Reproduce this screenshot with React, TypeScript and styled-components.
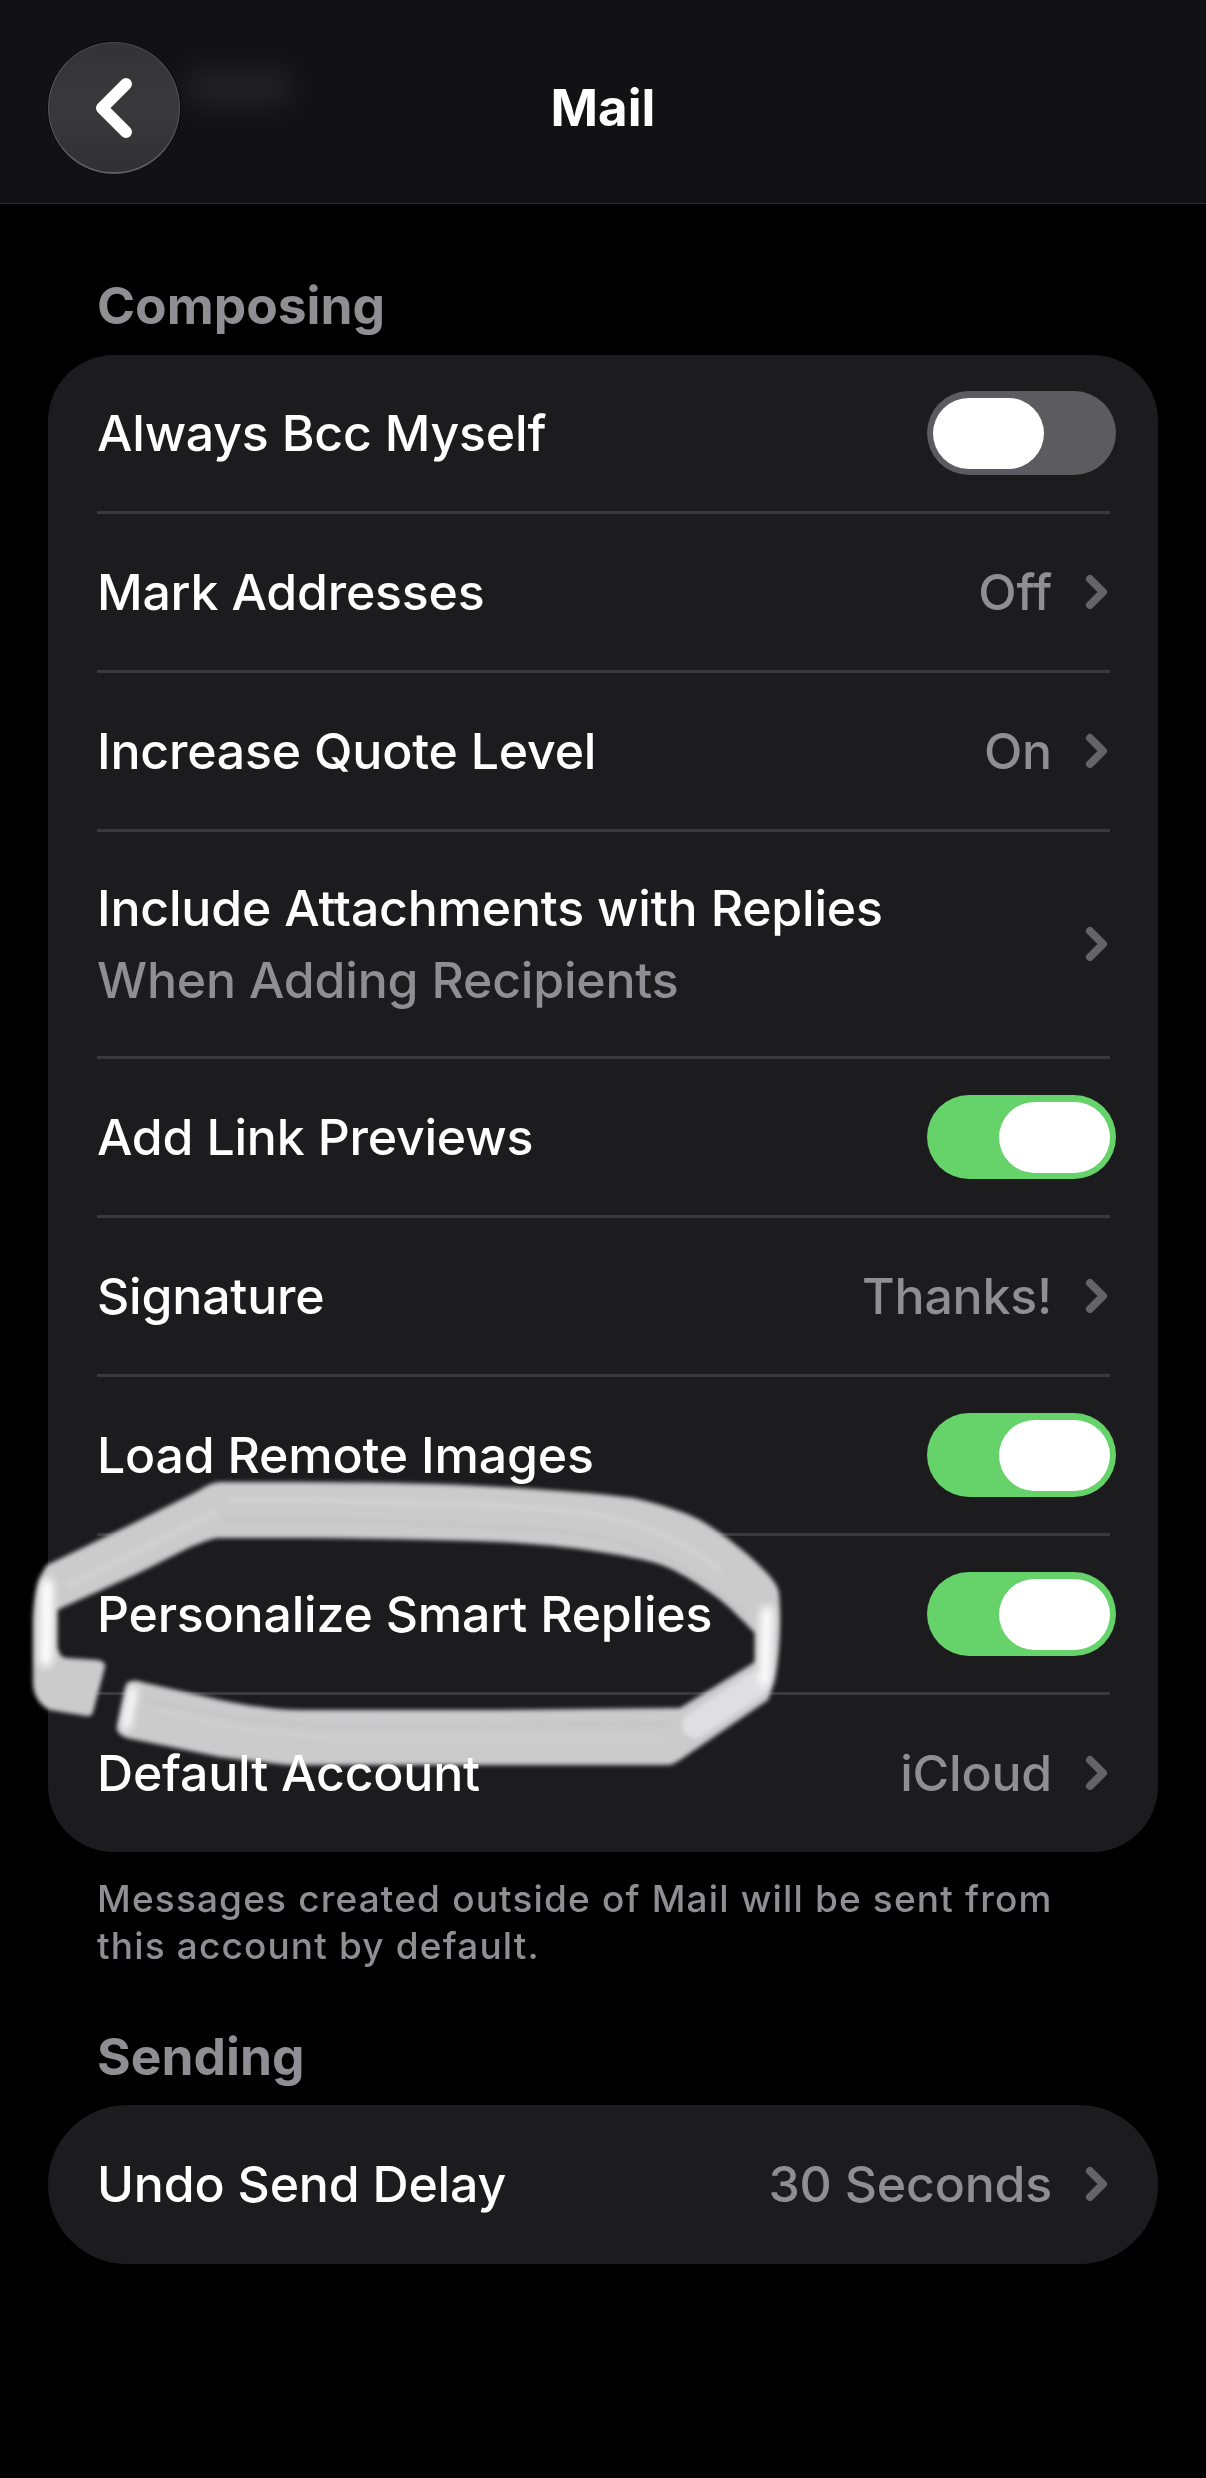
import styled, { createGlobalStyle } from 'styled-components'

const GlobalStyle = createGlobalStyle`
    html, body {
        margin: 0;
        padding: 0;
        background: #000;
    }
    body {
        font-family: Inter, "Noto Sans", "Liberation Sans", sans-serif;
        -webkit-font-smoothing: antialiased;
    }
`

// rows of the big "Composing" card
type RowData = {
    label: string;
    sub?: string;
    value?: string;
    toggle?: boolean;
    link?: boolean;
}

const composingRows: RowData[] = [
    { label: 'Always Bcc Myself', toggle: false },
    { label: 'Mark Addresses', value: 'Off', link: true },
    { label: 'Increase Quote Level', value: 'On', link: true },
    { label: 'Include Attachments with Replies', sub: 'When Adding Recipients', link: true },
    { label: 'Add Link Previews', toggle: true },
    { label: 'Signature', value: 'Thanks!', link: true },
    { label: 'Load Remote Images', toggle: true },
    { label: 'Personalize Smart Replies', toggle: true },
    { label: 'Default Account', value: 'iCloud', link: true },
]

const Chevron = () => (
    <ChevronIcon viewBox="0 0 23 36" aria-hidden="true">
        <path d="M5 5 L18 18 L5 31" fill="none" stroke="#636368" strokeWidth="8" strokeLinecap="round" strokeLinejoin="round" />
    </ChevronIcon>
)

const SettingRow = ({ row }: { row: RowData }) => (
    <Row $tall={!!row.sub}>
        <Labels>
            <Label>{row.label}</Label>
            {row.sub && <SubLabel>{row.sub}</SubLabel>}
        </Labels>
        {row.value && <Value>{row.value}</Value>}
        {row.link && <Chevron />}
        {row.toggle !== undefined && (
            <Toggle $on={row.toggle}>
                <Knob />
            </Toggle>
        )}
    </Row>
)

// the hand drawn marker ring around "Personalize Smart Replies"
const MarkerRing = () => (
    <RingCanvas viewBox="0 1460 820 320" aria-hidden="true">
        <defs>
            <filter id="soft" x="-5%" y="-5%" width="110%" height="110%">
                <feGaussianBlur stdDeviation="2.2" />
            </filter>
            <filter id="softer" x="-20%" y="-20%" width="140%" height="140%">
                <feGaussianBlur stdDeviation="4" />
            </filter>
        </defs>
        <path
            filter="url(#soft)"
            fill="#cbcbcc"
            d="M33 1620 C34 1595 38 1577 47 1565 L130 1525 L198 1491 C206 1486 212 1482 222 1482
               C320 1482 420 1482 500 1487 C550 1490 595 1493 633 1498 C660 1504 682 1511 700 1520
               C725 1535 750 1555 767 1573 C773 1580 778 1586 779 1593 C781 1615 780 1640 778 1657
               C776 1675 772 1690 768 1700 L680 1760 C675 1763 672 1765 667 1765 L500 1765 L287 1765
               L220 1757 L127 1738 C120 1735 117 1732 117 1727 L126 1686 C128 1681 132 1681 137 1681
               L220 1700 C250 1706 275 1710 303 1710 L500 1710 L680 1708 L755 1662 L755 1633
               C742 1620 730 1607 717 1597 C700 1585 685 1575 667 1567 C650 1560 625 1556 600 1552
               C570 1547 535 1544 500 1542 C400 1538 300 1538 217 1538 C190 1544 160 1564 130 1577
               L57 1610 L57 1647 C59 1654 62 1658 67 1658 L98 1660 C103 1661 106 1664 105 1667
               L93 1712 C92 1716 90 1716 86 1716 L50 1710 C40 1706 33 1695 33 1683 Z"
        />
        {/* faint streaks the marker leaves along the band */}
        <g filter="url(#soft)" fill="none" strokeLinecap="round">
            <path d="M230 1500 C340 1500 450 1502 560 1510 C620 1516 670 1530 720 1570" stroke="#d2d2d3" strokeWidth="5" />
            <path d="M225 1520 C340 1520 450 1522 570 1532 C640 1542 690 1565 745 1615" stroke="#c3c3c4" strokeWidth="3" />
            <path d="M70 1585 L140 1550 L215 1512" stroke="#d1d1d2" strokeWidth="7" />
            <path d="M150 1708 C220 1725 270 1735 340 1738 L660 1738" stroke="#cfcfd0" strokeWidth="4" />
            <path d="M145 1700 C220 1716 260 1724 330 1726 L670 1724" stroke="#c3c3c4" strokeWidth="3" />
            <path d="M695 1725 L755 1685" stroke="#dfdfe1" strokeWidth="26" />
        </g>
        {/* bright spots where the stroke turns */}
        <g filter="url(#softer)" fill="none" stroke="#ffffff" strokeLinecap="round">
            <path d="M47 1585 L46 1660" strokeWidth="13" />
            <path d="M767 1612 L765 1680" strokeWidth="12" />
            <path d="M133 1690 L126 1726" strokeWidth="9" />
        </g>
    </RingCanvas>
)

const App = () => {
    return (
        <Page>
            <GlobalStyle />
            <Header>
                <BackButton aria-label="Back">
                    <svg width="38" height="60" viewBox="0 0 38 60">
                        <path d="M31 6 L7 30 L31 54" fill="none" stroke="#fff" strokeWidth="12" strokeLinecap="round" strokeLinejoin="round" />
                    </svg>
                </BackButton>
                <Title>Mail</Title>
            </Header>

            <SectionTitle>Composing</SectionTitle>
            <Card>
                {composingRows.map((row, i) => (
                    <div key={row.label}>
                        {i > 0 && <Divider />}
                        <SettingRow row={row} />
                    </div>
                ))}
            </Card>
            <Footnote>
                Messages created outside of Mail will be sent from
                <br />
                this account by default.
            </Footnote>

            <SectionTitle $second>Sending</SectionTitle>
            <Card $pill>
                <SettingRow row={{ label: 'Undo Send Delay', value: '30 Seconds', link: true }} />
            </Card>

            <MarkerRing />
        </Page>
    )
}

export default App

const Page = styled.div`
    position: relative;
    width: 1206px;
    height: 2478px;
    overflow: hidden;
    background: #000;
    color: #fff;
`

const Header = styled.header`
    position: relative;
    box-sizing: border-box;
    height: 204px;
    padding: 42px 48px 0;
    display: flex;
    align-items: flex-start;
    background: #121214;
    border-bottom: 1px solid #2c2c2e;

    /* blurred page title sliding under the bar */
    &::after {
        content: '';
        position: absolute;
        left: 186px;
        top: 70px;
        width: 104px;
        height: 34px;
        background: #232325;
        filter: blur(14px);
    }
`

const BackButton = styled.div`
    position: relative;
    z-index: 1;
    box-sizing: border-box;
    width: 132px;
    height: 132px;
    border-radius: 50%;
    display: flex;
    align-items: center;
    justify-content: center;
    background: linear-gradient(180deg, #343436 0%, #39393b 55%, #303032 100%);
    border: 1px solid #55555a;
    border-top-color: #4a4a4d;
    border-bottom: 2px solid #5c5c60;
    box-shadow: 0 0 0 1px #0c0c0e;
`

const Title = styled.h1`
    position: absolute;
    left: 0;
    right: 0;
    top: 83px;
    margin: 0;
    text-align: center;
    font-size: 51px;
    line-height: 50px;
    font-weight: 700;
`

const SectionTitle = styled.h2<{ $second?: boolean }>`
    margin: ${(p) => (p.$second ? '58px' : '72px')} 0 ${(p) => (p.$second ? '20px' : '21px')} 97px;
    font-size: 51.5px;
    line-height: 58px;
    font-weight: 700;
    color: #8e8e93;
`

const Card = styled.section<{ $pill?: boolean }>`
    margin: 0 48px;
    padding: ${(p) => (p.$pill ? '1px 0 2px' : '0 0 1px')};
    background: #1c1c1e;
    border-radius: ${(p) => (p.$pill ? '79px' : '66px')};
    overflow: hidden;
`

const Row = styled.div<{ $tall?: boolean }>`
    height: ${(p) => (p.$tall ? '224px' : '156px')};
    padding: 0 42px 0 49px;
    display: flex;
    align-items: center;
`

const Labels = styled.div`
    flex: 1;
    min-width: 0;
`

const Label = styled.div`
    font-size: 50px;
    line-height: 60px;
    font-weight: 500;
    letter-spacing: -0.2px;
    color: #fff;
`

const SubLabel = styled.div`
    margin-top: 12px;
    font-size: 50px;
    line-height: 60px;
    font-weight: 500;
    letter-spacing: -0.2px;
    color: #8e8e93;
`

const Value = styled.div`
    font-size: 50px;
    line-height: 60px;
    font-weight: 500;
    letter-spacing: -0.2px;
    color: #8e8e93;
`

const ChevronIcon = styled.svg`
    flex: none;
    width: 23px;
    height: 36px;
    margin: 0 8px 0 33px;
`

const Toggle = styled.div<{ $on: boolean }>`
    flex: none;
    box-sizing: border-box;
    width: 189px;
    height: 84px;
    padding: 0 6px;
    border-radius: 42px;
    display: flex;
    align-items: center;
    justify-content: ${(p) => (p.$on ? 'flex-end' : 'flex-start')};
    background: ${(p) => (p.$on ? '#65d26a' : '#5b5b60')};
`

const Knob = styled.div`
    width: 111px;
    height: 71px;
    border-radius: 36px;
    background: #fff;
`

const Divider = styled.div`
    height: 3px;
    margin: 0 48px 0 49px;
    background: #3a3a3c;
`

const Footnote = styled.p`
    margin: 23px 48px 0 97px;
    font-size: 37px;
    line-height: 47px;
    font-weight: 500;
    letter-spacing: 1.15px;
    color: #8e8e93;
`

const RingCanvas = styled.svg`
    position: absolute;
    left: 0;
    top: 1460px;
    width: 820px;
    height: 320px;
    mix-blend-mode: lighten;
    pointer-events: none;
`
